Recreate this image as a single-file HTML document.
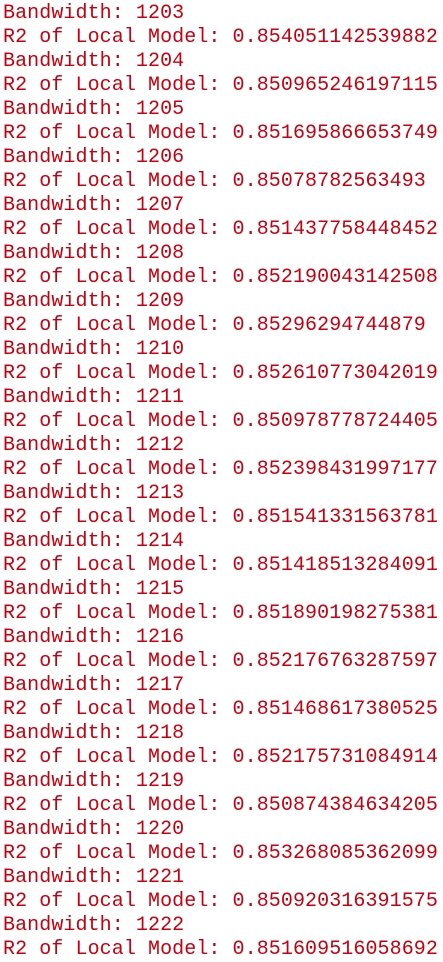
<!DOCTYPE html>
<html><head><meta charset="utf-8"><style>
html,body{margin:0;padding:0;background:#fff;width:443px;height:962px;overflow:hidden}
pre{margin:0;padding:2px 0 0 3px;font-family:"Liberation Mono",monospace;font-size:20px;line-height:24px;color:#c4000f;letter-spacing:0.08px}
</style></head><body><pre>Bandwidth: 1203
R2 of Local Model: 0.854051142539882
Bandwidth: 1204
R2 of Local Model: 0.850965246197115
Bandwidth: 1205
R2 of Local Model: 0.851695866653749
Bandwidth: 1206
R2 of Local Model: 0.85078782563493
Bandwidth: 1207
R2 of Local Model: 0.851437758448452
Bandwidth: 1208
R2 of Local Model: 0.852190043142508
Bandwidth: 1209
R2 of Local Model: 0.85296294744879
Bandwidth: 1210
R2 of Local Model: 0.852610773042019
Bandwidth: 1211
R2 of Local Model: 0.850978778724405
Bandwidth: 1212
R2 of Local Model: 0.852398431997177
Bandwidth: 1213
R2 of Local Model: 0.851541331563781
Bandwidth: 1214
R2 of Local Model: 0.851418513284091
Bandwidth: 1215
R2 of Local Model: 0.851890198275381
Bandwidth: 1216
R2 of Local Model: 0.852176763287597
Bandwidth: 1217
R2 of Local Model: 0.851468617380525
Bandwidth: 1218
R2 of Local Model: 0.852175731084914
Bandwidth: 1219
R2 of Local Model: 0.850874384634205
Bandwidth: 1220
R2 of Local Model: 0.853268085362099
Bandwidth: 1221
R2 of Local Model: 0.850920316391575
Bandwidth: 1222
R2 of Local Model: 0.851609516058692</pre></body></html>
